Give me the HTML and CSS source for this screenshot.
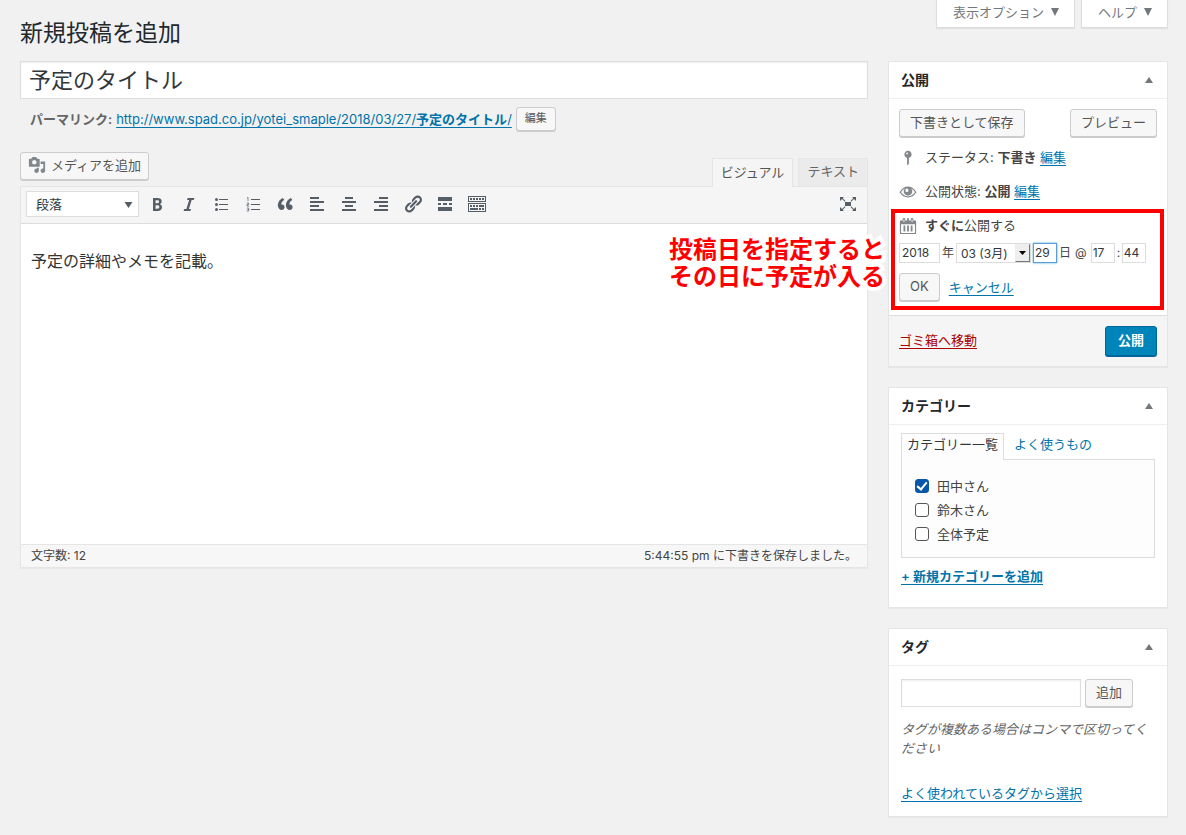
FILE: index.html
```html
<!DOCTYPE html>
<html lang="ja">
<head>
<meta charset="utf-8">
<title>新規投稿を追加</title>
<link rel="stylesheet" href="styles.css">
</head>
<body>
<div class="wrap">
  <header class="page-head">
    <h1>新規投稿を追加</h1>
    <div class="screen-tabs">
      <button type="button" class="screen-tab">表示オプション <svg viewBox="0 0 8 8"><path d="M0 0h8L4 8z"/></svg></button>
      <button type="button" class="screen-tab">ヘルプ <svg viewBox="0 0 8 8"><path d="M0 0h8L4 8z"/></svg></button>
    </div>
  </header>

  <div class="columns">
    <main class="main">
      <input class="title-input" type="text" aria-label="タイトル" value="予定のタイトル">
      <div class="permalink">
        <strong>パーマリンク:</strong>
        <a href="#">http://www.spad.co.jp/yotei_smaple/2018/03/27/<b>予定のタイトル</b>/</a>
        <button type="button" class="btn btn-small">編集</button>
      </div>

      <div class="editor-tools">
        <button type="button" class="btn btn-media">
          <svg viewBox="0 0 20 20"><path fill-rule="evenodd" d="M13 11V4c0-.55-.45-1-1-1h-1.670L9 1H5L3.670 3H2c-.55 0-1 .45-1 1v7c0 .55.45 1 1 1h10c.55 0 1-.45 1-1zM7 4.500c1.380 0 2.500 1.120 2.500 2.500S8.380 9.500 7 9.500 4.500 8.380 4.500 7 5.620 4.500 7 4.500zM14 6h5v10.500c0 1.380-1.120 2.500-2.500 2.500S14 17.880 14 16.500s1.120-2.500 2.500-2.500c.17 0 .34.02.5.05V9h-3V6zm-4 8.050V13h2v3.500c0 1.380-1.120 2.500-2.500 2.500S7 17.880 7 16.500 8.120 14 9.500 14c.17 0 .34.02.5.05z"/></svg>
          メディアを追加</button>
        <div class="editor-tabs">
          <button type="button" class="editor-tab active">ビジュアル</button>
          <button type="button" class="editor-tab">テキスト</button>
        </div>
      </div>

      <section class="editor">
        <div class="toolbar">
          <span class="format-box">
            <select aria-label="書式"><option>段落</option></select>
            <svg viewBox="0 0 8 6"><path d="M0 0h8L4 6z"/></svg>
          </span>
          <button type="button" class="tool" aria-label="太字"><svg viewBox="0 0 20 20"><path d="M6 4v13h4.540c1.370 0 2.460-.33 3.260-1 .8-.66 1.200-1.580 1.200-2.770 0-.84-.17-1.510-.51-2.010s-.9-.85-1.670-1.030v-.09c.57-.1 1.020-.4 1.360-.9s.51-1.130.51-1.910c0-1.140-.39-1.980-1.170-2.500C12.750 4.260 11.500 4 9.780 4H6zm2.570 5.150V6.260h1.360c.73 0 1.270.11 1.610.32.34.22.51.58.51 1.070 0 .54-.16.92-.47 1.150s-.82.35-1.510.35h-1.500zm0 2.190h1.600c1.440 0 2.160.53 2.160 1.610 0 .6-.17 1.050-.51 1.340s-.86.43-1.570.43H8.570v-3.380z"/></svg></button>
          <button type="button" class="tool" aria-label="イタリック"><svg viewBox="0 0 20 20"><path d="M14.780 6h-2.130l-2.800 9h2.120l-.62 2H4.600l.62-2h2.140l2.800-9H8.030l.62-2h6.750z"/></svg></button>
          <button type="button" class="tool" aria-label="番号なしリスト"><svg viewBox="0 0 20 20"><circle cx="5.500" cy="5.500" r="1.500"/><circle cx="5.500" cy="10.500" r="1.500"/><circle cx="5.500" cy="15.500" r="1.500"/><path d="M8 5h9v1H8zM8 10h9v1H8zM8 15h9v1H8z"/></svg></button>
          <button type="button" class="tool" aria-label="番号付きリスト"><svg viewBox="0 0 20 20"><path d="M8 5h9v1H8zM8 10h9v1H8zM8 15h9v1H8z"/><path class="line" d="M4 4l1-.6V7M3.700 9h2v1.500h-1.700v1.500h2.200M3.700 14h2v3h-2m.6-1.500h1.400"/></svg></button>
          <button type="button" class="tool" aria-label="引用"><svg viewBox="0 0 20 20"><path d="M9.490 13.220c0-.74-.2-1.380-.61-1.900-.62-.78-1.830-.88-2.530-.72-.29-1.650 1.110-3.750 2.920-4.650L7.880 4c-2.730 1.300-5.420 4.280-4.960 8.050C3.210 14.430 4.590 16 6.540 16c.85 0 1.560-.25 2.120-.75s.83-1.180.83-2.030zm8.050 0c0-.74-.2-1.380-.61-1.900-.63-.78-1.830-.88-2.530-.72-.29-1.650 1.110-3.750 2.920-4.650L15.930 4c-2.730 1.300-5.410 4.280-4.950 8.050.29 2.380 1.660 3.950 3.610 3.950.85 0 1.560-.25 2.120-.75s.83-1.180.83-2.030z"/></svg></button>
          <button type="button" class="tool" aria-label="左寄せ"><svg viewBox="0 0 20 20"><path d="M3 3h9v2H3zM3 7h14v2H3zM3 11h9v2H3zM3 15h14v2H3z"/></svg></button>
          <button type="button" class="tool" aria-label="中央揃え"><svg viewBox="0 0 20 20"><path d="M6 3h8v2H6zM3 7h14v2H3zM6 11h8v2H6zM3 15h14v2H3z"/></svg></button>
          <button type="button" class="tool" aria-label="右寄せ"><svg viewBox="0 0 20 20"><path d="M8 3h9v2H8zM3 7h14v2H3zM8 11h9v2H8zM3 15h14v2H3z"/></svg></button>
          <button type="button" class="tool" aria-label="リンク"><svg viewBox="0 0 20 20"><path d="M17.740 2.760c1.680 1.690 1.680 4.410 0 6.100l-1.530 1.520c-1.120 1.120-2.700 1.470-4.140 1.090l2.620-2.610.76-.77.76-.76c.84-.84.84-2.200 0-3.040-.84-.85-2.200-.85-3.040 0l-.77.76-3.380 3.380c-.37-1.440-.02-3.020 1.100-4.140l1.520-1.530c1.690-1.680 4.420-1.680 6.100 0zM8.590 13.430l5.340-5.340c.42-.42.42-1.100 0-1.520-.44-.43-1.130-.39-1.530 0l-5.330 5.340c-.42.42-.42 1.100 0 1.520.44.43 1.130.39 1.520 0zm-.76 2.290l4.140-4.150c.38 1.440.03 3.020-1.090 4.140l-1.520 1.530c-1.690 1.680-4.410 1.680-6.100 0-1.680-1.680-1.680-4.420 0-6.100l1.530-1.520c1.120-1.120 2.700-1.470 4.140-1.100l-4.140 4.150c-.85.84-.85 2.200 0 3.050.84.84 2.200.84 3.040 0z"/></svg></button>
          <button type="button" class="tool" aria-label="続きを読む"><svg viewBox="0 0 20 20"><path d="M17 7V3H3v4h14zM6 11V9H3v2h3zm6 0V9H8v2h4zm5 0V9h-3v2h3zm0 6v-4H3v4h14z"/></svg></button>
          <button type="button" class="tool" aria-label="ツールバー切り替え"><svg viewBox="0 0 20 20"><path fill-rule="evenodd" d="M19 2v6H1V2h18zm-1 5V3H2v4h16zM5 4v2H3V4h2zm3 0v2H6V4h2zm3 0v2H9V4h2zm3 0v2h-2V4h2zm3 0v2h-2V4h2zm2 5v9H1V9h18zm-1 8v-7H2v7h16zM5 11v2H3v-2h2zm3 0v2H6v-2h2zm3 0v2H9v-2h2zm6 0v2h-5v-2h5zm-6 3v2H3v-2h8zm3 0v2h-2v-2h2zm3 0v2h-2v-2h2z"/></svg></button>
          <button type="button" class="tool tool-end" aria-label="集中執筆モード"><svg viewBox="0 0 20 20"><path d="M7 8h6v4H7zM2 3h4L4.700 4.300 7.500 7l-.7.7L4 5 2 7zM18 3h-4l1.300 1.300L12.500 7l.7.7L16 5l2 2zM2 17h4l-1.300-1.300L7.500 13l-.7-.7L4 15l-2-2zM18 17h-4l1.300-1.300-2.800-2.700.7-.7L16 15l2-2z"/></svg></button>
        </div>
        <div class="content" contenteditable="true" role="textbox" aria-label="本文"><p>予定の詳細やメモを記載。</p></div>
        <div class="statusbar"><span>文字数: 12</span><span>5:44:55 pm に下書きを保存しました。</span></div>
      </section>
    </main>

    <aside class="side">
      <section class="box">
        <header class="box-head"><h2>公開</h2><button type="button" class="toggle" aria-label="公開パネルを閉じる"><svg viewBox="0 0 8 6"><path d="M0 6h8L4 0z"/></svg></button></header>
        <div class="publish">
          <div class="publish-actions">
            <button type="button" class="btn">下書きとして保存</button>
            <button type="button" class="btn">プレビュー</button>
          </div>
          <div class="publish-row">
            <svg viewBox="0 0 20 20"><path fill-rule="evenodd" d="M14 6c0 1.860-1.280 3.410-3 3.860V16c0 1-2 2-2 2V9.860C7.280 9.410 6 7.860 6 6c0-2.210 1.790-4 4-4s4 1.790 4 4zM8 5c0 .55.45 1 1 1s1-.45 1-1-.45-1-1-1-1 .45-1 1z"/></svg>
            <span>ステータス: <b>下書き</b> <a href="#">編集</a></span>
          </div>
          <div class="publish-row">
            <svg viewBox="0 0 20 20"><path fill-rule="evenodd" d="M.6 10.300C3 6.200 6.300 4 10 4s7 2.200 9.400 6.300C17 14.200 13.700 16 10 16S3 14.200.6 10.300zM2.300 10.300C3.800 12.900 6.600 14.700 10 14.700s6.200-1.800 7.700-4.400c-1-1.800-2.500-3.300-4.200-4.200.9 1 1.300 2.200 1.300 3.400 0 2.600-2.100 4.400-4.800 4.400S5.200 12.100 5.200 9.500c0-1.200.4-2.400 1.300-3.400-1.700.9-3.200 2.400-4.200 4.200zM8.300 6.200C7 6.900 6.700 8.900 7.600 9.700s2.700.2 2.900-1.200S9.500 5.700 8.300 6.200z"/></svg>
            <span>公開状態: <b>公開</b> <a href="#">編集</a></span>
          </div>
          <div class="schedule">
            <p class="callout">投稿日を指定すると<br>その日に予定が入る</p>
            <div class="publish-row">
              <svg viewBox="0 0 20 20"><path fill-rule="evenodd" d="M1 4h3V2.500a1.500 1.500 0 013 0V4h2V1.500h2V4h2V2.500a1.500 1.500 0 013 0V4h3v15H1zM2.300 8v9.700h15.400V8zM5 2.800v2.700h1V2.800zM14 2.800v2.700h1V2.800zM5 9.500h2V16H5zM9 9.500h2V16H9zM13 9.500h2V16h-2z"/></svg>
              <span><b>すぐに</b>公開する</span>
            </div>
            <div class="date-fields">
              <label><input class="year" type="text" aria-label="年" value="2018"> 年</label>
              <span class="month">
                <select aria-label="月"><option>03 (3月)</option></select>
                <span class="month-arrow"><svg viewBox="0 0 7 4"><path d="M0 0h7L3.500 4z"/></svg></span>
              </span>
              <label><input class="two focused" type="text" aria-label="日" value="29"> 日</label>
              <span class="at">@</span>
              <input class="two" type="text" aria-label="時" value="17">
              <span class="colon">:</span>
              <input class="two" type="text" aria-label="分" value="44">
            </div>
            <div class="date-actions">
              <button type="button" class="btn">OK</button>
              <a href="#">キャンセル</a>
            </div>
          </div>
        </div>
        <footer class="publish-foot">
          <a class="trash" href="#">ゴミ箱へ移動</a>
          <button type="button" class="btn btn-primary">公開</button>
        </footer>
      </section>

      <section class="box">
        <header class="box-head"><h2>カテゴリー</h2><button type="button" class="toggle" aria-label="カテゴリーパネルを閉じる"><svg viewBox="0 0 8 6"><path d="M0 6h8L4 0z"/></svg></button></header>
        <div class="categories">
          <nav class="cat-tabs"><a class="active" href="#">カテゴリー一覧</a><a href="#">よく使うもの</a></nav>
          <div class="cat-list">
            <label><input type="checkbox" checked>田中さん</label>
            <label><input type="checkbox">鈴木さん</label>
            <label><input type="checkbox">全体予定</label>
          </div>
          <a class="cat-add" href="#">+ 新規カテゴリーを追加</a>
        </div>
      </section>

      <section class="box">
        <header class="box-head"><h2>タグ</h2><button type="button" class="toggle" aria-label="タグパネルを閉じる"><svg viewBox="0 0 8 6"><path d="M0 6h8L4 0z"/></svg></button></header>
        <div class="tags">
          <div class="tag-entry">
            <input type="text" aria-label="新規タグ">
            <button type="button" class="btn">追加</button>
          </div>
          <p>タグが複数ある場合はコンマで区切ってください</p>
          <a href="#">よく使われているタグから選択</a>
        </div>
      </section>
    </aside>
  </div>
</div>
</body>
</html>
```
FILE: styles.css
```css
* { box-sizing: border-box; }

body {
  margin: 0;
  background: #f1f1f1;
  color: #444;
  font: 13px/20px Inter, "Noto Sans CJK JP", sans-serif;
}

h1, h2, p { margin: 0; }
button, input, select { font: inherit; color: inherit; margin: 0; }
button { cursor: pointer; }
svg { display: block; fill: currentColor; flex: none; }
b, strong { font-weight: 600; }

a {
  color: #0073aa;
  text-decoration: underline 1px;
  text-underline-offset: 3px;
  text-decoration-skip-ink: none;
}

.wrap { padding: 0 18px 16px 20px; }

/* Page header */
.page-head {
  display: flex;
  justify-content: space-between;
  align-items: flex-start;
  height: 61px;
}
.page-head h1 {
  padding-top: 18px;
  font-size: 23px;
  font-weight: 400;
  line-height: 30px;
  color: #23282d;
}
.screen-tabs { display: flex; gap: 6px; }
.screen-tab {
  display: flex;
  align-items: center;
  gap: 7px;
  height: 28px;
  padding: 0 15px 3px 16px;
  border: 1px solid #ddd;
  border-top: 0;
  background: #fff;
  color: #72777c;
  box-shadow: 0 1px 1px rgba(0, 0, 0, .06);
}
.screen-tab svg { width: 8px; height: 8px; }

.columns {
  display: grid;
  grid-template-columns: minmax(0, 1fr) 280px;
  gap: 20px;
  align-items: start;
}

/* Buttons */
.btn {
  height: 28px;
  padding: 0 10px 2px;
  border: 1px solid #ccc;
  border-radius: 3px;
  background: #f7f7f7;
  color: #555;
  box-shadow: 0 1px 0 #ccc;
  white-space: nowrap;
}
.btn-small { height: 24px; padding: 0 8px 2px; font-size: 11px; }
.btn-primary {
  height: 30px;
  padding: 0 12px 2px;
  border-color: #006799;
  background: #0085ba;
  color: #fff;
  font-weight: 600;
  box-shadow: 0 1px 0 #006799;
}

/* Title and permalink */
.title-input {
  display: block;
  width: 100%;
  height: 38px;
  padding: 0 8px 4px;
  border: 1px solid #ddd;
  background: #fff;
  color: #32373c;
  font-size: 22px;
  box-shadow: inset 0 1px 2px rgba(0, 0, 0, .07);
}
.permalink {
  display: flex;
  align-items: center;
  gap: 4px;
  height: 53px;
  padding: 0 10px 13px;
  color: #666;
}

/* Editor */
.editor-tools {
  display: flex;
  justify-content: space-between;
  align-items: flex-start;
  height: 34px;
}
.btn-media { display: flex; align-items: center; gap: 5px; padding: 0 7px 2px; }
.btn-media svg { width: 18px; height: 18px; color: #82878c; }
.editor-tabs { display: flex; gap: 5px; padding-top: 6px; }
.editor-tab {
  position: relative;
  height: 28px;
  padding: 0 8px 3px;
  border: 1px solid #e5e5e5;
  border-bottom: 0;
  background: #ebebeb;
  color: #666;
}
.editor-tab.active { height: 29px; background: #f5f5f5; color: #555; }
.editor {
  border: 1px solid #e5e5e5;
  background: #fff;
  box-shadow: 0 1px 1px rgba(0, 0, 0, .04);
}
.toolbar {
  display: flex;
  align-items: center;
  height: 37px;
  padding: 0 3px 2px 5px;
  border-bottom: 1px solid #ddd;
  background: #f5f5f5;
}
.format-box { position: relative; width: 113px; margin-right: 2px; }
.format-box select {
  display: block;
  width: 100%;
  height: 26px;
  padding: 0 9px;
  border: 1px solid #ddd;
  border-radius: 0;
  background: #fff;
  color: #32373c;
  appearance: none;
}
.format-box svg {
  position: absolute;
  top: 11px;
  right: 6px;
  width: 9px;
  height: 6px;
  color: #555d66;
  pointer-events: none;
}
.tool {
  display: grid;
  place-items: center;
  width: 32px;
  height: 28px;
  padding: 0;
  border: 0;
  background: none;
  color: #555d66;
}
.tool svg { width: 20px; height: 20px; }
.tool .line { fill: none; stroke: currentColor; stroke-width: .7; }
.tool-end { margin-left: auto; }
.content {
  height: 320px;
  padding: 24px 10px;
  color: #333;
  font: 16px/28px "Liberation Serif", "Noto Sans CJK JP", serif;
  outline: 0;
}
.statusbar {
  display: flex;
  justify-content: space-between;
  padding: 1px 10px;
  border-top: 1px solid #e5e5e5;
  background: #f7f7f7;
  font-size: 12px;
}

/* Side panels */
.side { display: grid; gap: 20px; }
.box {
  border: 1px solid #e5e5e5;
  background: #fff;
  box-shadow: 0 1px 1px rgba(0, 0, 0, .04);
}
.box-head {
  display: flex;
  justify-content: space-between;
  align-items: center;
  height: 37px;
  padding: 0 14px 1px 12px;
  border-bottom: 1px solid #eee;
}
.box-head h2 { color: #23282d; font-size: 14px; font-weight: 600; }
.toggle { padding: 0; border: 0; background: none; color: #72777c; }
.toggle svg { width: 8px; height: 6px; }

/* Publish */
.publish { padding: 10px; }
.publish-actions { display: flex; justify-content: space-between; margin-bottom: 4px; }
.publish-row { display: flex; align-items: center; gap: 8px; height: 34px; }
.publish-row svg { width: 18px; height: 18px; color: #82878c; }
.publish-row span { padding-bottom: 2px; }
.schedule { position: relative; }
.schedule::before {
  content: "";
  position: absolute;
  inset: 0 -7px -9px -8px;
  border: 4px solid #f00;
  pointer-events: none;
}
.callout {
  position: absolute;
  z-index: 1;
  top: 27px;
  right: calc(100% + 14px);
  color: #f00;
  font-size: 24px;
  font-weight: 700;
  line-height: 27px;
  white-space: nowrap;
  paint-order: stroke fill;
  -webkit-text-stroke: 8px #fff;
}
.date-fields {
  display: flex;
  align-items: center;
  gap: 2px;
  height: 20px;
  font-size: 12px;
}
.date-fields label { display: flex; align-items: center; gap: 2px; }
.date-fields input {
  height: 20px;
  padding: 0 2px;
  border: 1px solid #ddd;
  background: #fff;
  color: #32373c;
}
.date-fields .year { width: 41px; }
.date-fields .two { width: 24px; padding: 0 1px; }
.date-fields .focused { border-color: #5b9dd9; box-shadow: 0 0 2px rgba(30, 140, 190, .8); outline: 0; }
.at { padding: 0 2px; }
.colon { width: 3px; text-align: center; }
.month { position: relative; }
.month select {
  display: block;
  width: 75px;
  height: 20px;
  padding: 0 4px;
  border: 1px solid #ddd;
  border-radius: 0;
  background: #fff;
  color: #32373c;
  appearance: none;
}
.month-arrow {
  position: absolute;
  top: 1px;
  right: 1px;
  display: grid;
  place-items: center;
  width: 15px;
  height: 18px;
  border: 1px solid #eee;
  border-right-color: #777;
  border-bottom-color: #777;
  background: #eee;
  color: #000;
  pointer-events: none;
}
.month-arrow svg { width: 7px; height: 4px; }
.date-actions { display: flex; align-items: center; gap: 9px; padding-top: 10px; }
.publish-foot {
  display: flex;
  justify-content: space-between;
  align-items: center;
  height: 51px;
  margin-top: 4px;
  padding: 0 10px;
  border-top: 1px solid #ddd;
  background: #f5f5f5;
}
.trash { padding-bottom: 2px; color: #a00; }

/* Categories */
.categories { padding: 8px 12px 21px; }
.cat-tabs { display: flex; gap: 4px; }
.cat-tabs a { height: 26px; padding: 0 5px; border: 1px solid transparent; border-bottom: 0; text-decoration: none; }
.cat-tabs .active {
  position: relative;
  height: 27px;
  margin-bottom: -1px;
  border-color: #ddd;
  background: #fdfdfd;
  color: #32373c;
}
.cat-list {
  display: grid;
  margin-bottom: 8px;
  padding: 14px 13px 11px;
  border: 1px solid #ddd;
  background: #fdfdfd;
}
.cat-list label { display: flex; align-items: center; gap: 8px; height: 24px; }
.cat-list input {
  display: grid;
  place-items: center;
  width: 14px;
  height: 14px;
  border: 1px solid #555;
  border-radius: 3px;
  background: #fff;
  appearance: none;
}
.cat-list input:checked { border-color: #0a56a8; background: #0a56a8; }
.cat-list input:checked::before {
  content: "";
  width: 4px;
  height: 8px;
  margin-bottom: 2px;
  border: solid #fff;
  border-width: 0 2px 2px 0;
  rotate: 40deg;
}
.cat-add { font-weight: 600; }

/* Tags */
.tags { padding: 13px 12px; }
.tag-entry { display: flex; gap: 4px; margin-bottom: 13px; }
.tag-entry input {
  width: 180px;
  height: 28px;
  padding: 3px 5px;
  border: 1px solid #ddd;
  background: #fff;
  box-shadow: inset 0 1px 2px rgba(0, 0, 0, .07);
}
.tags p { margin-bottom: 25px; color: #666; font-style: italic; line-height: 19px; }
```
